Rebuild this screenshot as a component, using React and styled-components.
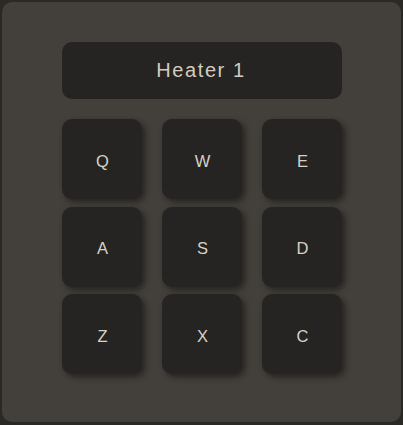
import React from "react";
import styled, { createGlobalStyle } from "styled-components";

const Global = createGlobalStyle`
  html, body {
    margin: 0;
    padding: 0;
    background: #2a2926;
  }
  body {
    font-family: "Liberation Sans", Arial, sans-serif;
  }
  #root {
    padding: 2px;
  }
`;

const Panel = styled.div`
  box-sizing: border-box;
  width: 399px;
  height: 420px;
  background: #433f3a;
  border-radius: 10px;
  padding: 40px 0 0 60px;
  display: flex;
  flex-direction: column;
  gap: 20px;
`;

const Display = styled.div`
  width: 280px;
  height: 57px;
  background: #252422;
  border-radius: 10px;
  display: flex;
  align-items: center;
  justify-content: center;
  color: #d3ccbf;
  font-size: 20px;
  letter-spacing: 1.6px;
  padding-right: 2px;
  box-sizing: border-box;
`;

const Pad = styled.div`
  display: grid;
  grid-template-columns: repeat(3, 80px);
  grid-auto-rows: 80px;
  column-gap: 20px;
  row-gap: 7.5px;
`;

const Key = styled.button`
  box-sizing: border-box;
  width: 80px;
  height: 80px;
  border: none;
  padding: 4px 0 0 1px;
  background: #252422;
  border-radius: 10px;
  box-shadow: 3px 3px 6px rgba(0, 0, 0, 0.45);
  color: #d8d2c6;
  font-family: "Liberation Sans", Arial, sans-serif;
  font-size: 16.5px;
  display: flex;
  align-items: center;
  justify-content: center;
  cursor: pointer;
`;

const keys = ["Q", "W", "E", "A", "S", "D", "Z", "X", "C"];

export default function App() {
  return (
    <>
      <Global />
      <Panel>
        <Display>Heater 1</Display>
        <Pad>
          {keys.map((k) => (
            <Key key={k}>{k}</Key>
          ))}
        </Pad>
      </Panel>
    </>
  );
}
